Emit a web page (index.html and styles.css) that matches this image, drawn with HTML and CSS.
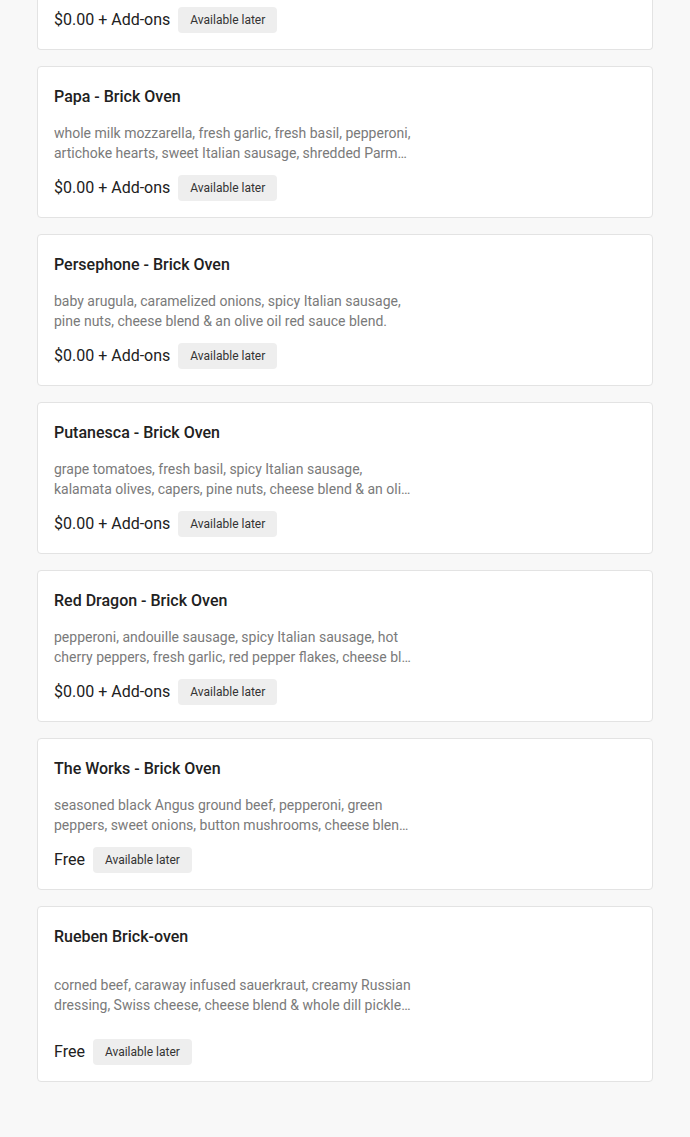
FILE: index.html
```html
<!DOCTYPE html>
<html>
<head>
<meta charset="utf-8">
<link rel="stylesheet" href="styles.css">
</head>
<body>
<div class="list">
  <div class="card card--cut">
    <div class="price-row">
      <span class="price">$0.00 + Add-ons</span>
      <span class="badge">Available later</span>
    </div>
  </div>

  <div class="card">
    <h3 class="title">Papa - Brick Oven</h3>
    <p class="desc">
      <span class="line">whole milk mozzarella, fresh garlic, fresh basil, pepperoni,</span>
      <span class="line line--last">artichoke hearts, sweet Italian sausage, shredded Parmesan, cheese blend &amp; an olive oil red sauce blend.</span>
    </p>
    <div class="price-row">
      <span class="price">$0.00 + Add-ons</span>
      <span class="badge">Available later</span>
    </div>
  </div>

  <div class="card">
    <h3 class="title">Persephone - Brick Oven</h3>
    <p class="desc">
      <span class="line">baby arugula, caramelized onions, spicy Italian sausage,</span>
      <span class="line line--last">pine nuts, cheese blend &amp; an olive oil red sauce blend.</span>
    </p>
    <div class="price-row">
      <span class="price">$0.00 + Add-ons</span>
      <span class="badge">Available later</span>
    </div>
  </div>

  <div class="card">
    <h3 class="title">Putanesca - Brick Oven</h3>
    <p class="desc">
      <span class="line">grape tomatoes, fresh basil, spicy Italian sausage,</span>
      <span class="line line--last">kalamata olives, capers, pine nuts, cheese blend &amp; an olive oil red sauce blend.</span>
    </p>
    <div class="price-row">
      <span class="price">$0.00 + Add-ons</span>
      <span class="badge">Available later</span>
    </div>
  </div>

  <div class="card">
    <h3 class="title">Red Dragon - Brick Oven</h3>
    <p class="desc">
      <span class="line">pepperoni, andouille sausage, spicy Italian sausage, hot</span>
      <span class="line line--last">cherry peppers, fresh garlic, red pepper flakes, cheese blend &amp; an olive oil red sauce blend.</span>
    </p>
    <div class="price-row">
      <span class="price">$0.00 + Add-ons</span>
      <span class="badge">Available later</span>
    </div>
  </div>

  <div class="card">
    <h3 class="title">The Works - Brick Oven</h3>
    <p class="desc">
      <span class="line">seasoned black Angus ground beef, pepperoni, green</span>
      <span class="line line--last">peppers, sweet onions, button mushrooms, cheese blend &amp; an olive oil red sauce blend.</span>
    </p>
    <div class="price-row">
      <span class="price">Free</span>
      <span class="badge">Available later</span>
    </div>
  </div>

  <div class="card card--tall">
    <h3 class="title">Rueben Brick-oven</h3>
    <p class="desc">
      <span class="line">corned beef, caraway infused sauerkraut, creamy Russian</span>
      <span class="line line--last">dressing, Swiss cheese, cheese blend &amp; whole dill pickle slices.</span>
    </p>
    <div class="price-row">
      <span class="price">Free</span>
      <span class="badge">Available later</span>
    </div>
  </div>
</div>
</body>
</html>
```

FILE: styles.css
```css
html, body {
  margin: 0;
  padding: 0;
}

body {
  background: #f8f8f8;
  font-family: Roboto, "Liberation Sans", Arial, sans-serif;
  color: #212121;
}

.list {
  display: flex;
  flex-direction: column;
  gap: 16px;
  padding: 0 37px 56px 37px;
}

.card {
  background: #ffffff;
  border: 1px solid #e3e3e3;
  border-radius: 4px;
  padding: 17px 16px 16px 16px;
  display: flex;
  flex-direction: column;
}

.card--cut {
  border-top: none;
  border-top-left-radius: 0;
  border-top-right-radius: 0;
  padding-top: 7px;
}

.title {
  margin: 0;
  font-size: 16px;
  line-height: 26px;
  font-weight: 500;
  color: #212121;
}

.desc {
  margin: 13px 0 0 0;
  width: 358px;
  font-size: 14px;
  line-height: 20px;
  color: #7a7a7a;
  display: flex;
  flex-direction: column;
}

.line {
  display: block;
  white-space: nowrap;
  overflow: hidden;
}

.line--last {
  text-overflow: ellipsis;
}

.card--tall .desc {
  margin-top: 25px;
}

.card--tall .price-row {
  margin-top: 24px;
}

.price-row {
  margin-top: 12px;
  display: flex;
  align-items: center;
  gap: 8px;
}

.card--cut .price-row {
  margin-top: 0;
}

.price {
  font-size: 16px;
  line-height: 24px;
  color: #212121;
}

.badge {
  background: #eeeeee;
  border-radius: 4px;
  padding: 4px 12px;
  font-size: 12px;
  line-height: 18px;
  color: #333333;
}
```
